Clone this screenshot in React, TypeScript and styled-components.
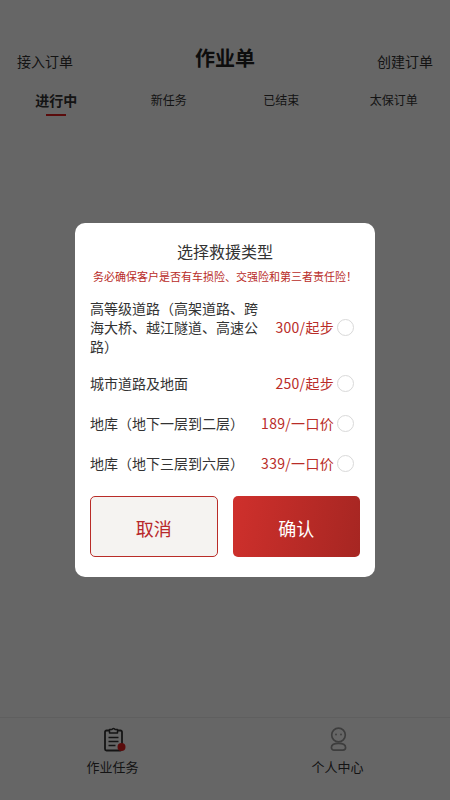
import styled, { createGlobalStyle } from "styled-components"

const GlobalStyle = createGlobalStyle`
    html, body {
        margin: 0;
        padding: 0;
        background: #fff;
    }
    body {
        font-family: "Noto Sans CJK SC", "Liberation Sans", sans-serif;
        color: #333;
    }
`

const Page = styled.div`
    width: 450px;
    height: 800px;
    display: flex;
    flex-direction: column;
    background: #fff;
`

const Header = styled.header`
    height: 72px;
    padding: 44px 17px 0;
    box-sizing: border-box;
    display: flex;
    justify-content: space-between;
    align-items: flex-start;
`

const HeaderLink = styled.span`
    font-size: 14px;
    line-height: 20px;
    margin-top: 7px;
    color: #333;
`

const Title = styled.h1`
    margin: 0;
    font-size: 20px;
    line-height: 28px;
    font-weight: 700;
    color: #222;
`

const Tabs = styled.nav`
    display: grid;
    grid-template-columns: repeat(4, 1fr);
    margin-top: 18px;
`

const Tab = styled.div<{ $active?: boolean }>`
    display: flex;
    flex-direction: column;
    align-items: center;
    height: 26px;
    font-size: ${props => (props.$active ? "14px" : "12px")};
    font-weight: ${props => (props.$active ? 700 : 400)};
    line-height: 20px;
    color: #333;

    &::after {
        content: "";
        width: 20px;
        height: 2px;
        margin-top: 4px;
        background: ${props => (props.$active ? "#e02020" : "transparent")};
    }
`

const Spacer = styled.div`
    flex: 1;
`

const TabBar = styled.footer`
    height: 83px;
    box-sizing: border-box;
    border-top: 1px solid #eee;
    display: grid;
    grid-template-columns: 1fr 1fr;
`

const BarItem = styled.div`
    display: flex;
    flex-direction: column;
    align-items: center;
    padding-top: 8px;
    font-size: 13px;
    line-height: 18px;
    color: #333;

    svg {
        display: block;
        margin-bottom: 6px;
    }
`

const Overlay = styled.div`
    position: fixed;
    inset: 0;
    background: rgba(0, 0, 0, 0.6);
    display: flex;
    align-items: center;
    justify-content: center;
`

const Modal = styled.div`
    width: 300px;
    box-sizing: border-box;
    padding: 18px 15px 20px;
    background: #fff;
    border-radius: 10px;
`

const ModalTitle = styled.div`
    font-size: 16px;
    line-height: 20px;
    text-align: center;
    color: #333;
`

const Warning = styled.div`
    margin-top: 7px;
    font-size: 11px;
    line-height: 16px;
    text-align: center;
    color: #b92c28;
    white-space: nowrap;
`

const Options = styled.div`
    margin-top: 7px;
`

const Option = styled.div<{ $tall?: boolean }>`
    display: flex;
    align-items: center;
    justify-content: space-between;
    padding: ${props => (props.$tall ? "8px 6px 7px 0" : "10px 6px 10px 0")};
    font-size: 14px;
    line-height: ${props => (props.$tall ? "19px" : "20px")};
`

const OptionName = styled.div<{ $wrap?: boolean }>`
    flex: ${props => (props.$wrap ? "0 0 168px" : "0 1 auto")};
    color: #333;
`

const OptionEnd = styled.div`
    flex: none;
    display: flex;
    align-items: center;
    gap: 3px;
`

const Price = styled.div`
    color: #b92c28;
    letter-spacing: 0.3px;
    white-space: nowrap;
`

const Radio = styled.span`
    flex: none;
    width: 15px;
    height: 15px;
    border: 1px solid #d9d9d9;
    border-radius: 50%;
    background: #fff;
`

const Actions = styled.div`
    margin-top: 13px;
    display: grid;
    grid-template-columns: 1fr 1fr;
    gap: 15px;
`

const Button = styled.button<{ $primary?: boolean }>`
    height: 61px;
    padding: 3px 0 0;
    font-family: inherit;
    font-size: 18px;
    border-radius: 5px;
    border: ${props => (props.$primary ? "none" : "1px solid #b92c28")};
    background: ${props => (props.$primary ? "linear-gradient(100deg, #cf302c, #a62622)" : "#f5f3f1")};
    color: ${props => (props.$primary ? "#fff" : "#b8282a")};
`

const ClipboardIcon = () => (
    <svg width="26" height="26" viewBox="0 0 26 26" fill="none">
        <path d="M9 4.5H6.5a1.5 1.5 0 0 0-1.5 1.5v17a1.5 1.5 0 0 0 1.5 1.5h14a1.5 1.5 0 0 0 1.5-1.5V6a1.5 1.5 0 0 0-1.5-1.5H18" stroke="#333" strokeWidth="1.8" />
        <path d="M9.5 7V3.5h2.5a1.6 1.6 0 0 1 3 0h2.5V7z" stroke="#333" strokeWidth="1.5" strokeLinejoin="round" />
        <path d="M8.5 11.5h10M8.5 15.5h10M8.5 19.5h7" stroke="#333" strokeWidth="1.5" />
        <circle cx="21.5" cy="21" r="4" fill="#e02020" />
    </svg>
)

const PersonIcon = () => (
    <svg width="26" height="26" viewBox="0 0 26 26" fill="none">
        <circle cx="13.5" cy="9" r="6.8" stroke="#999" strokeWidth="1.7" />
        <circle cx="11" cy="8.5" r="0.9" fill="#999" />
        <circle cx="16" cy="8.5" r="0.9" fill="#999" />
        <path d="M9 24.2h9a2.6 2.6 0 0 0 2.6-2.6c0-2.6-3-4.2-7.1-4.2s-7.1 1.6-7.1 4.2A2.6 2.6 0 0 0 9 24.2z" stroke="#999" strokeWidth="1.7" />
    </svg>
)

const options = [
    { name: "高等级道路（高架道路、跨海大桥、越江隧道、高速公路）", price: "300/起步", tall: true },
    { name: "城市道路及地面", price: "250/起步" },
    { name: "地库（地下一层到二层）", price: "189/一口价" },
    { name: "地库（地下三层到六层）", price: "339/一口价" },
]

export default function App() {
    return (
        <Page>
            <GlobalStyle />
            <Header>
                <HeaderLink>接入订单</HeaderLink>
                <Title>作业单</Title>
                <HeaderLink>创建订单</HeaderLink>
            </Header>
            <Tabs>
                <Tab $active>进行中</Tab>
                <Tab>新任务</Tab>
                <Tab>已结束</Tab>
                <Tab>太保订单</Tab>
            </Tabs>
            <Spacer />
            <TabBar>
                <BarItem>
                    <ClipboardIcon />
                    作业任务
                </BarItem>
                <BarItem>
                    <PersonIcon />
                    个人中心
                </BarItem>
            </TabBar>
            <Overlay>
                <Modal>
                    <ModalTitle>选择救援类型</ModalTitle>
                    <Warning>务必确保客户是否有车损险、交强险和第三者责任险！</Warning>
                    <Options>
                        {options.map(option => (
                            <Option key={option.price} $tall={option.tall}>
                                <OptionName $wrap={option.tall}>{option.name}</OptionName>
                                <OptionEnd>
                                    <Price>{option.price}</Price>
                                    <Radio />
                                </OptionEnd>
                            </Option>
                        ))}
                    </Options>
                    <Actions>
                        <Button>取消</Button>
                        <Button $primary>确认</Button>
                    </Actions>
                </Modal>
            </Overlay>
        </Page>
    )
}
